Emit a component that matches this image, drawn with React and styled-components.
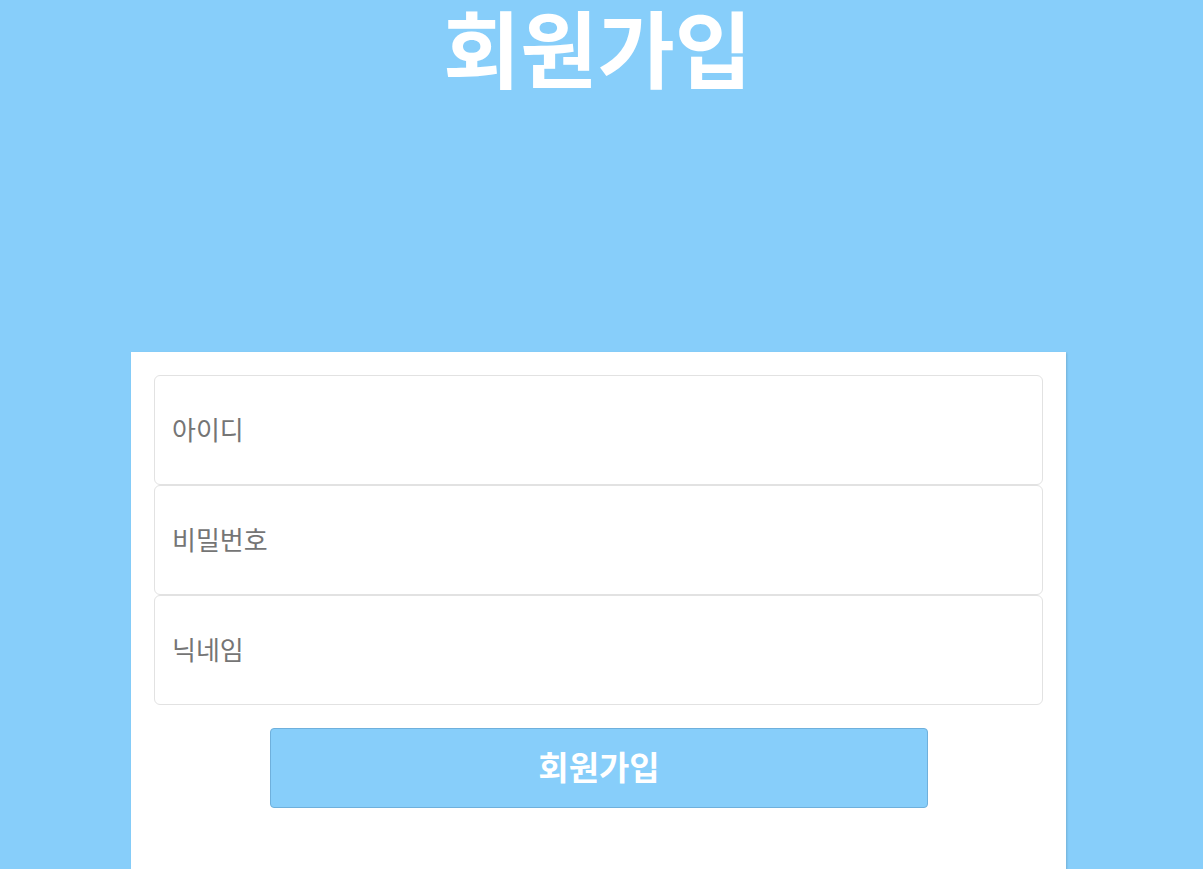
import React from 'react';
import styled, { createGlobalStyle } from 'styled-components';

const GlobalStyle = createGlobalStyle`
  body {
    margin: 0;
    background-color: #87cefa;
    font-family: "Noto Sans CJK KR", "Noto Sans", sans-serif;
  }
`

const Page = styled.div`
  min-height: 869px;
  display: flex;
  flex-direction: column;
  align-items: center;
`

const Title = styled.h1`
  margin: 0 8px 0 0;
  padding-top: 4px;
  height: 348px;
  font-size: 84px;
  line-height: 84px;
  font-weight: 700;
  color: white;
  text-align: center;
`

const Card = styled.div`
  width: 935px;
  box-sizing: border-box;
  margin-right: 6px;
  padding: 23px 23px 60px;
  background-color: white;
  box-shadow: 1px 1px 2px rgba(0, 0, 0, 0.15);
  display: flex;
  flex-direction: column;
  min-height: 517px;
`

const Input = styled.input`
  height: 110px;
  box-sizing: border-box;
  border: 1px solid #e2e2e2;
  border-radius: 6px;
  padding: 0 17px 4px;
  font-family: inherit;
  font-size: 26px;
  color: #333;
  outline: none;
  &::placeholder {
    color: #757575;
  }
`

const Button = styled.button`
  align-self: center;
  width: 658px;
  height: 80px;
  margin-top: 23px;
  margin-left: 1px;
  padding: 0 0 4px;
  background-color: #87cefa;
  border: 1px solid #6fb0dc;
  border-radius: 4px;
  color: white;
  font-family: inherit;
  font-size: 33px;
  font-weight: 700;
  cursor: pointer;
`

const App = () => {
  return (
    <Page>
      <GlobalStyle />
      <Title>회원가입</Title>
      <Card>
        <Input type="text" placeholder="아이디" />
        <Input type="password" placeholder="비밀번호" />
        <Input type="text" placeholder="닉네임" />
        <Button>회원가입</Button>
      </Card>
    </Page>
  )
}

export default App;
